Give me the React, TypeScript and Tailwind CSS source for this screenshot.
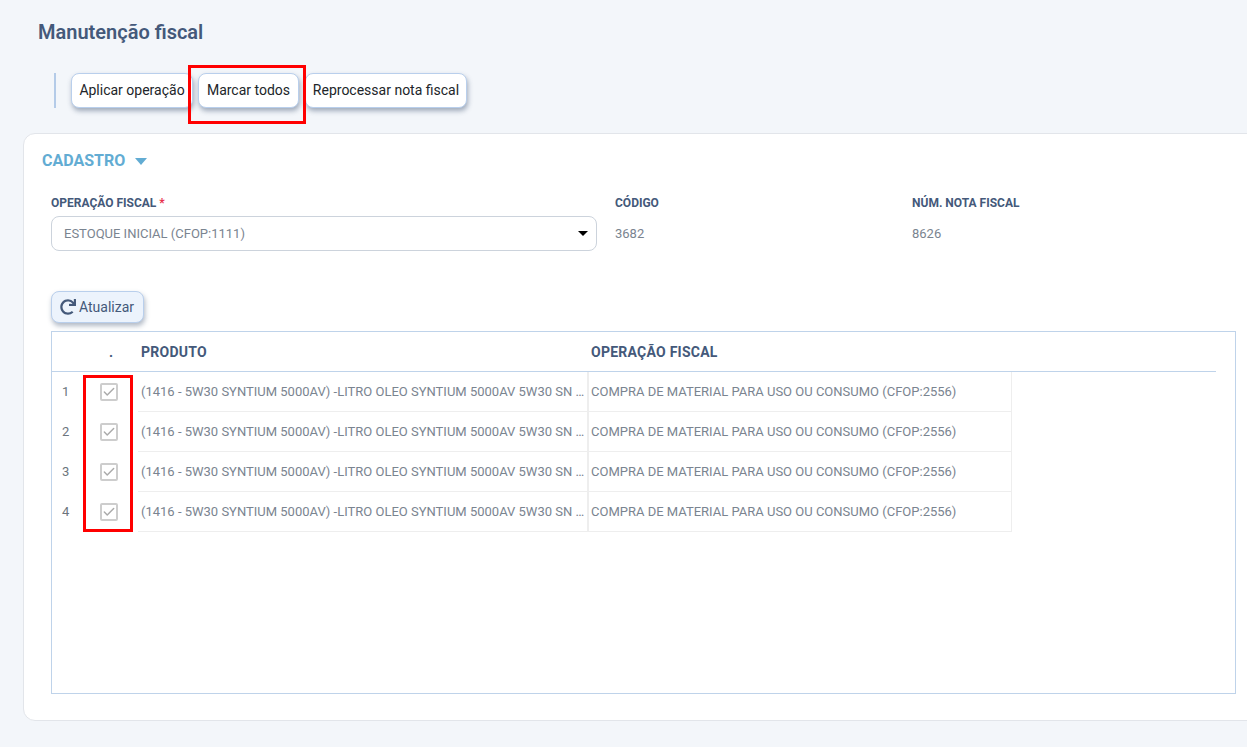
import { Check } from "lucide-react";
import { FaRedo } from "react-icons/fa";

const rows = [1, 2, 3, 4];

function ToolButton({ label, className = "" }: { label: string; className?: string }) {
  return (
    <button className={`h-[35px] pb-[1px] flex items-center justify-center rounded-lg bg-white border border-[#b9cfec] text-sm text-[#212529] whitespace-nowrap shadow-[1px_3px_5px_rgba(60,80,110,0.45)] ${className}`}>
      {label}
    </button>
  );
}

function Row({ n }: { n: number }) {
  return (
    <div className="flex h-10 text-[13px] text-[#7a8490]">
      <div className="w-[33px] flex items-center pl-[10px] text-[#6c757d]">{n}</div>
      <div className="w-[53px] flex items-center pl-[15px]">
        <span className="w-[18px] h-[18px] border-2 border-[#cdcdcd] rounded-[2px] flex items-center justify-center">
          <Check size={14} strokeWidth={2.5} className="text-[#ababab]" />
        </span>
      </div>
      <div className="w-[451px] flex items-center pl-[3px] border-b border-[#eeeeee] border-r-2 border-r-[#eeeeee] whitespace-nowrap">
        <span className="w-[445px] truncate">(1416 - 5W30 SYNTIUM 5000AV) -LITRO OLEO SYNTIUM 5000AV 5W30 SN PLUS</span>
      </div>
      <div className="w-[423px] flex items-center pl-[2px] border-b border-r border-[#eeeeee] whitespace-nowrap">
        COMPRA DE MATERIAL PARA USO OU CONSUMO (CFOP:2556)
      </div>
    </div>
  );
}

export default function App() {
  return (
    <div className="relative h-[747px] w-full overflow-hidden bg-[#f3f6fa] font-['Roboto',sans-serif]">
      <h1 className="pl-[38px] pt-[20px] text-xl leading-6 font-semibold text-[#44597a]">Manutenção fiscal</h1>

      <div className="ml-[54px] mt-[29px] h-[35px] flex items-center border-l-2 border-[#b4cbe8] pl-[15px]">
        <ToolButton label="Aplicar operação" className="w-[122px]" />
        <ToolButton label="Marcar todos" className="ml-[5px] w-[101px]" />
        <ToolButton label="Reprocessar nota fiscal" className="ml-[6px] w-[162px]" />
      </div>

      <div className="ml-[23px] mr-[-12px] mt-[25px] h-[588px] rounded-l-xl bg-white border border-[#e2e5ea] pr-[22px]">
        <div className="pl-[18px] pt-[16px] flex items-center h-[38px]">
          <span className="text-base font-bold leading-5 text-[#62acd3]">CADASTRO</span>
          <span className="ml-[10px] mt-[1px] w-0 h-0 border-x-[6px] border-x-transparent border-t-[7px] border-t-[#62acd3]" />
        </div>

        <div className="flex pl-[27px] pt-[24px]">
          <div className="w-[546px]">
            <label className="block h-[14px] text-xs leading-[14px] font-bold text-[#44597a]">
              OPERAÇÃO FISCAL <span className="text-[#e8304a]">*</span>
            </label>
            <div className="mt-[6px] h-[35px] flex items-center justify-between rounded-lg border border-[#ccd3dc] pl-3 pr-[8px] text-[13px] text-[#7a8490]">
              <span>ESTOQUE INICIAL (CFOP:1111)</span>
              <span className="w-0 h-0 border-x-[5px] border-x-transparent border-t-[5px] border-t-black" />
            </div>
          </div>
          <div className="ml-[18px] w-[297px]">
            <label className="block h-[14px] text-xs leading-[14px] font-bold text-[#44597a]">CÓDIGO</label>
            <div className="mt-[6px] h-[35px] flex items-center text-[13px] text-[#7a8490]">3682</div>
          </div>
          <div>
            <label className="block h-[14px] text-xs leading-[14px] font-bold text-[#44597a]">NÚM. NOTA FISCAL</label>
            <div className="mt-[6px] h-[35px] flex items-center text-[13px] text-[#7a8490]">8626</div>
          </div>
        </div>

        <div className="pl-[27px] pt-[40px]">
          <button className="h-8 w-[93px] flex items-center pl-[8px] gap-[3px] rounded-lg bg-[#ecf3fc] border border-[#b9cfec] text-sm text-[#44597a] shadow-[1px_3px_5px_rgba(60,80,110,0.4)]">
            <FaRedo size={16} />
            Atualizar
          </button>

          <div className="mt-[8px] h-[363px] border border-[#bfd3ea]">
            <div className="mr-[19px] h-10 flex items-center border-b border-[#bfd3ea] text-sm font-bold text-[#44597a]">
              <div className="w-[57px]" />
              <div className="w-[32px]">.</div>
              <div className="w-[450px] tracking-[0.25px]">PRODUTO</div>
              <div className="tracking-[0.25px]">OPERAÇÃO FISCAL</div>
            </div>
            {rows.map((n) => (
              <Row key={n} n={n} />
            ))}
          </div>
        </div>
      </div>

      {/* destaques vermelhos por cima da tela */}
      <div className="absolute left-[188px] top-[65px] w-[118px] h-[59px] border-[3px] border-[#ff0000]" />
      <div className="absolute left-[83px] top-[375px] w-[50px] h-[157px] border-[3px] border-[#ff0000]" />
    </div>
  );
}
